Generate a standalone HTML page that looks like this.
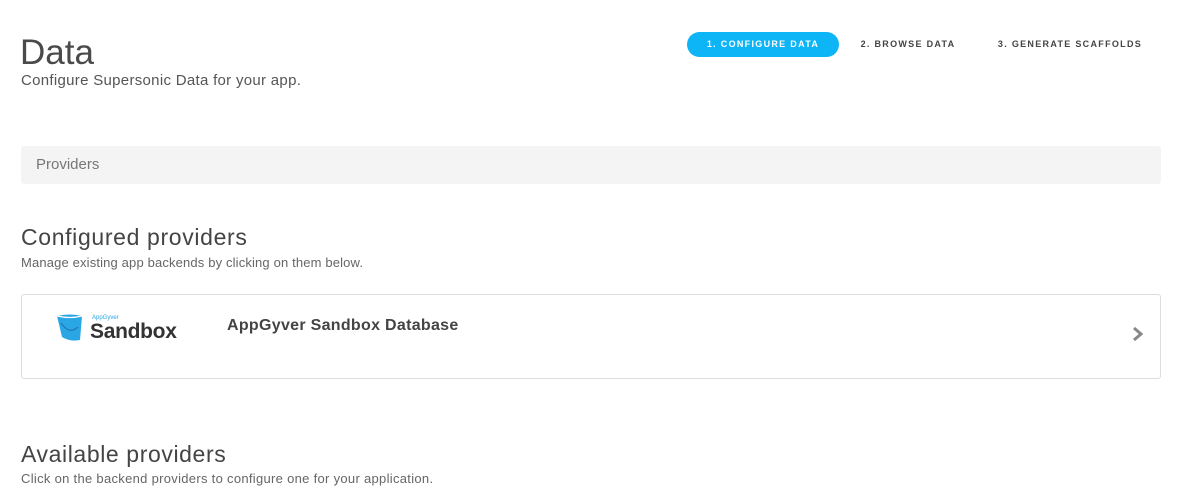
<!DOCTYPE html>
<html><head><meta charset="utf-8"><style>
body{margin:0;width:1200px;height:496px;background:#fff;font-family:"Liberation Sans",sans-serif;color:#4a4a4a;overflow:hidden;position:relative}
.a{position:absolute;white-space:nowrap}
.step{position:absolute;font-size:9px;font-weight:bold;letter-spacing:1.3px;color:#444;top:32px;height:25px;line-height:25px;text-align:center}
</style></head><body>
<div class="a" style="left:20px;top:33px;font-size:35px;color:#4a4a4a">Data</div>
<div class="a" style="left:21px;top:72px;font-size:15px;letter-spacing:0.3px;color:#555">Configure Supersonic Data for your app.</div>
<div class="step" style="left:687px;width:152px;background:#0db4f6;border-radius:13px;color:#fff">1. CONFIGURE DATA</div>
<div class="step" style="left:855px;width:106px">2. BROWSE DATA</div>
<div class="step" style="left:993px;width:154px">3. GENERATE SCAFFOLDS</div>
<div class="a" style="left:21px;top:146px;width:1140px;height:38px;background:#f4f4f4;border-radius:3px"></div>
<div class="a" style="left:36px;top:156px;font-size:15px;color:#777">Providers</div>
<div class="a" style="left:21px;top:224px;font-size:23px;letter-spacing:0.65px;color:#444">Configured providers</div>
<div class="a" style="left:21px;top:255px;font-size:13px;letter-spacing:0.15px;color:#666">Manage existing app backends by clicking on them below.</div>
<div class="a" style="left:21px;top:294px;width:1138px;height:83px;border:1px solid #ddd;border-radius:3px"></div>
<svg class="a" style="left:55px;top:313px" width="30" height="30" viewBox="0 0 30 30"><path d="M2 3 Q15 0 27 3 L25 27 Q15 29 7 24 Z" fill="#2ba6e4"/><path d="M2 3 Q15 6 27 3" stroke="#fff" stroke-width="1.2" fill="none"/><path d="M6 10 Q14 22 23 14" stroke="#1a6fa8" stroke-width="1" fill="none"/></svg>
<div class="a" style="left:92px;top:315px;font-size:6px;color:#2ba6e4">AppGyver</div>
<div class="a" style="left:90px;top:320px;font-size:21px;font-weight:bold;color:#333;letter-spacing:-0.3px">Sandbox</div>
<div class="a" style="left:227px;top:317px;font-size:16px;letter-spacing:0.3px;font-weight:bold;color:#444">AppGyver Sandbox Database</div>
<svg class="a" style="left:1132px;top:326px" width="12" height="16" viewBox="0 0 12 16"><path d="M2 2 L9 8 L2 14" stroke="#888" stroke-width="3" fill="none"/></svg>
<div class="a" style="left:21px;top:441px;font-size:23px;letter-spacing:0.6px;color:#444">Available providers</div>
<div class="a" style="left:21px;top:471px;font-size:13px;letter-spacing:0.3px;color:#666">Click on the backend providers to configure one for your application.</div>
</body></html>
